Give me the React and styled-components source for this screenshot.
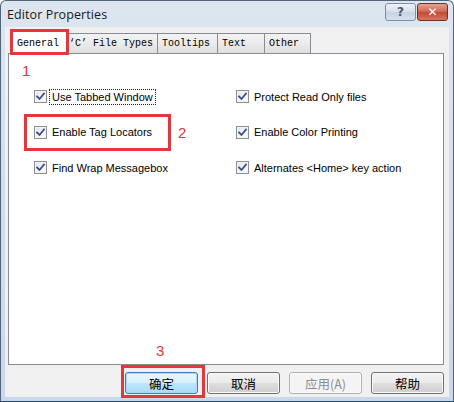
import React from "react";
import styled, { createGlobalStyle } from "styled-components";

const Global = createGlobalStyle`
  html, body { margin: 0; padding: 0; width: 454px; height: 402px; overflow: hidden; background: #fff; }
  #root { width: 454px; height: 402px; }
`;

const Window = styled.div`
  position: relative;
  width: 454px;
  height: 402px;
  box-sizing: border-box;
  border: 1px solid #52637a;
  border-bottom-color: #1f4f66;
  border-radius: 6px 6px 0 0;
  background: linear-gradient(180deg, #dde6f0 0%, #d3dfeb 40%, #c8d8ea 100%);
  display: flex;
  flex-direction: column;
  font-family: "Liberation Sans", Arial, sans-serif;
`;

const TitleBar = styled.div`
  height: 26px;
  display: flex;
  align-items: center;
  padding: 0 5px 0 6px;
`;

const Title = styled.div`
  flex: 1;
  font-size: 12.5px;
  color: #1a1a1a;
  font-family: "Open Sans", "Liberation Sans", sans-serif;
  letter-spacing: 0.1px;
  padding-top: 1px;
`;

const CaptionGroup = styled.div`
  display: flex;
  gap: 1px;
  margin-top: -4px;
`;

const CaptionButton = styled.div`
  width: 31px;
  height: 18px;
  box-sizing: border-box;
  border: 1px solid ${(p) => (p.$close ? "#7a2a22" : "#7d8ea5")};
  border-radius: 3px;
  background: ${(p) =>
    p.$close
      ? "linear-gradient(180deg, #e8a092 0%, #d26a58 45%, #c24a34 55%, #d27a60 100%)"
      : "linear-gradient(180deg, #eef3f8 0%, #d8e1ec 45%, #c6d3e2 55%, #d6e2ef 100%)"};
  display: flex;
  align-items: center;
  justify-content: center;
  color: ${(p) => (p.$close ? "#fff" : "#4c5c70")};
  font-size: 12px;
  font-weight: bold;
  font-family: "DejaVu Sans", sans-serif;
`;

const Client = styled.div`
  flex: 1;
  margin: 0 4px 4px 4px;
  background: #f0f0f0;
  padding: 4px 5px 0 3px;
  display: flex;
  flex-direction: column;
`;

const TabRow = styled.div`
  display: flex;
  align-items: flex-end;
  height: 23px;
  padding-left: 5px;
  position: relative;
  z-index: 2;
`;

const Tab = styled.div`
  box-sizing: border-box;
  width: ${(p) => p.$w}px;
  height: ${(p) => (p.$active ? 24 : 21)}px;
  margin: ${(p) => (p.$active ? "0 -2px -1px -2px" : "0")};
  padding-left: ${(p) => (p.$active ? 5 : 4)}px;
  border: 1px solid #898c95;
  border-bottom: ${(p) => (p.$active ? "none" : "1px solid #898c95")};
  border-left: ${(p) => (p.$first || p.$active ? "1px solid #898c95" : "none")};
  background: ${(p) =>
    p.$active ? "#ffffff" : "linear-gradient(180deg, #f3f3f3 0%, #ebebeb 50%, #dedede 100%)"};
  font-family: "Liberation Mono", "Courier New", monospace;
  font-size: 10px;
  color: #000;
  display: flex;
  align-items: center;
  position: relative;
  z-index: ${(p) => (p.$active ? 3 : 1)};
  white-space: pre;
`;

const Panel = styled.div`
  height: 312px;
  box-sizing: border-box;
  border: 1px solid #898c95;
  background: #fff;
  padding: 34px 0 0 25px;
  margin-top: -1px;
`;

const OptionGrid = styled.div`
  display: grid;
  grid-template-columns: 202px 200px;
  row-gap: 18.5px;
`;

const Option = styled.div`
  display: flex;
  align-items: center;
  height: 17px;
  gap: 2px;
`;

const Box = styled.div`
  width: 13px;
  height: 13px;
  box-sizing: border-box;
  border: 1px solid #8e8f8f;
  background: linear-gradient(135deg, #dfe3ec 0%, #f4f6f9 60%, #ffffff 100%);
  box-shadow: inset 0 0 0 1px #f4f4f4;
  display: flex;
  align-items: center;
  justify-content: center;
`;

const Label = styled.span`
  font-size: 11px;
  color: #000;
  padding: 1px 2px;
  border: 1px dotted ${(p) => (p.$focus ? "#222" : "transparent")};
  white-space: nowrap;
`;

const ButtonRow = styled.div`
  display: flex;
  justify-content: flex-end;
  gap: 9px;
  margin-top: 7px;
`;

const Button = styled.div`
  width: 73px;
  height: 22px;
  box-sizing: border-box;
  border-radius: 3px;
  border: 1px solid ${(p) => (p.$default ? "#3c7fb1" : p.$disabled ? "#adb2b5" : "#707070")};
  background: ${(p) =>
    p.$disabled
      ? "#f4f4f4"
      : p.$default
      ? "linear-gradient(180deg, #eaf6fd 0%, #d9f0fc 48%, #bee6fd 52%, #a7d9f5 100%)"
      : "linear-gradient(180deg, #f2f2f2 0%, #ebebeb 48%, #dddddd 52%, #cfcfcf 100%)"};
  box-shadow: ${(p) => (p.$default ? "inset 0 0 0 1px #a9dbf6" : "inset 0 0 0 1px #fafafa")};
  display: flex;
  align-items: center;
  justify-content: center;
  font-family: "Noto Sans CJK SC", sans-serif;
  font-size: 12.5px;
  color: ${(p) => (p.$disabled ? "#8d8d8d" : "#000")};
`;

const Mark = styled.div`
  position: absolute;
  box-sizing: border-box;
  border: 3px solid #e3363d;
  left: ${(p) => p.$x}px;
  top: ${(p) => p.$y}px;
  width: ${(p) => p.$w}px;
  height: ${(p) => p.$h}px;
  z-index: 10;
  pointer-events: none;
`;

const MarkNum = styled.div`
  position: absolute;
  left: ${(p) => p.$x}px;
  top: ${(p) => p.$y}px;
  color: #e0363c;
  font-family: "Liberation Sans", Arial, sans-serif;
  font-size: 15px;
  line-height: 15px;
  z-index: 10;
`;

const Check = () => (
  <svg width="9" height="9" viewBox="0 0 9 9">
    <path d="M1 4.5 L3.5 7 L8 1.5" fill="none" stroke="#3c4f8a" strokeWidth="1.8" strokeLinecap="square" />
  </svg>
);

const CheckOption = ({ label, focus }) => (
  <Option>
    <Box>
      <Check />
    </Box>
    <Label $focus={focus}>{label}</Label>
  </Option>
);

export default function App() {
  return (
    <>
      <Global />
      <Window>
        <TitleBar>
          <Title>Editor Properties</Title>
          <CaptionGroup>
            <CaptionButton>?</CaptionButton>
            <CaptionButton $close>✕</CaptionButton>
          </CaptionGroup>
        </TitleBar>
        <Client>
          <TabRow>
            <Tab $active $first $w={56}>General</Tab>
            <Tab $w={93}>‘C’ File Types</Tab>
            <Tab $w={60}>Tooltips</Tab>
            <Tab $w={47}>Text</Tab>
            <Tab $w={46}>Other</Tab>
          </TabRow>
          <Panel>
            <OptionGrid>
              <CheckOption label="Use Tabbed Window" focus />
              <CheckOption label="Protect Read Only files" />
              <CheckOption label="Enable Tag Locators" />
              <CheckOption label="Enable Color Printing" />
              <CheckOption label="Find Wrap Messagebox" />
              <CheckOption label="Alternates <Home> key action" />
            </OptionGrid>
          </Panel>
          <ButtonRow>
            <Button $default>确定</Button>
            <Button>取消</Button>
            <Button $disabled>应用(A)</Button>
            <Button>帮助</Button>
          </ButtonRow>
        </Client>
        <Mark $x={9} $y={28} $w={59} $h={26} />
        <MarkNum $x={21} $y={62}>1</MarkNum>
        <Mark $x={23} $y={113} $w={147} $h={37} />
        <MarkNum $x={177} $y={124}>2</MarkNum>
        <Mark $x={120} $y={364} $w={84} $h={33} />
        <MarkNum $x={155} $y={342}>3</MarkNum>
      </Window>
    </>
  );
}
